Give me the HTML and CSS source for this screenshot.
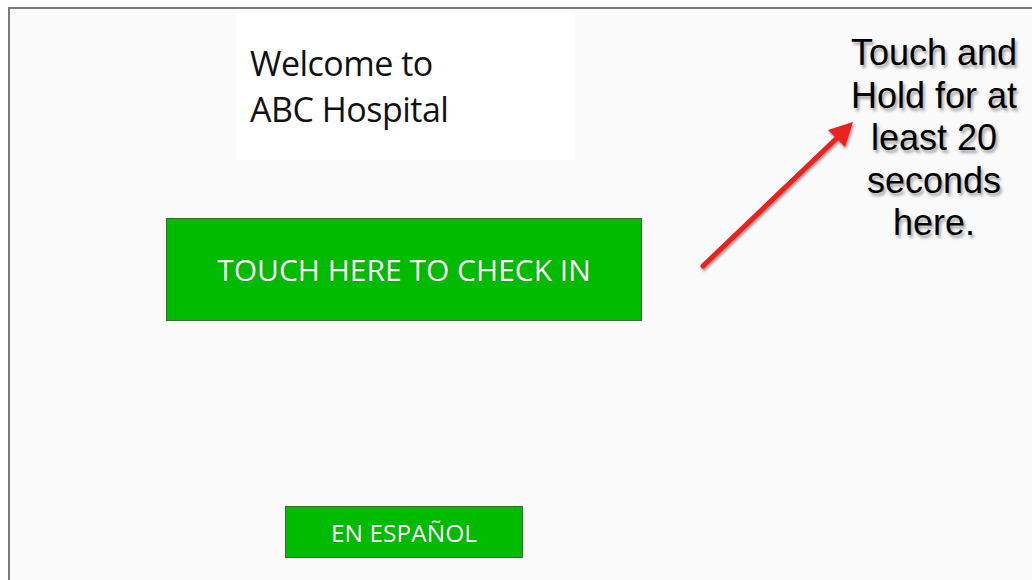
FILE: index.html
```html
<!DOCTYPE html>
<html lang="en">
<head>
<meta charset="utf-8">
<title>ABC Hospital Check-In</title>
<link rel="stylesheet" href="styles.css">
</head>
<body>
  <div class="screen">
    <div class="welcome">
      <p>Welcome to</p>
      <p>ABC Hospital</p>
    </div>
    <button class="btn btn-checkin">TOUCH HERE TO CHECK IN</button>
    <button class="btn btn-spanish">EN ESPAÑOL</button>
  </div>

  <svg class="arrow" width="180" height="170" viewBox="0 0 180 170">
    <defs>
      <filter id="arrow-shadow" x="-20%" y="-20%" width="140%" height="140%">
        <feDropShadow dx="1" dy="2" stdDeviation="1.5" flood-color="#000" flood-opacity="0.45"/>
      </filter>
    </defs>
    <g filter="url(#arrow-shadow)">
      <line x1="8" y1="152" x2="143" y2="23" stroke="#e8201f" stroke-width="5" stroke-linecap="round"/>
      <polygon points="158,8 150,33 133,16" fill="#e8201f"/>
    </g>
  </svg>

  <div class="hint">Touch and<br>Hold for at<br>least 20<br>seconds<br>here.</div>
</body>
</html>
```
FILE: styles.css
```css
html, body {
  margin: 0;
  padding: 0;
  background: #ffffff;
}

body {
  position: relative;
  width: 1032px;
  height: 580px;
  overflow: hidden;
}

.screen {
  margin: 7px 0 0 8px;
  height: 573px;
  border-left: 2px solid #7a7a7a;
  border-top: 2px solid #7a7a7a;
  background: #fafafa;
  display: flex;
  flex-direction: column;
  align-items: flex-start;
  font-family: "Open Sans", "Noto Sans", sans-serif;
}

.welcome {
  margin: 4px 0 0 226px;
  width: 325px;
  height: 120px;
  padding: 27px 0 0 14px;
  background: #ffffff;
  color: #111111;
  font-size: 34px;
  line-height: 46px;
  letter-spacing: -0.5px;
}

.welcome p {
  margin: 0;
  white-space: nowrap;
}

.btn {
  display: flex;
  align-items: center;
  justify-content: center;
  background: #00bb00;
  border: 1px solid #3c6b3c;
  color: #ffffff;
  font-family: "Open Sans", "Noto Sans", sans-serif;
  padding: 0;
  text-shadow: 0 0 1px rgba(0, 60, 0, 0.4);
}

.btn-checkin {
  margin: 58px 0 0 156px;
  width: 476px;
  height: 103px;
  font-size: 30px;
}

.btn-spanish {
  margin: 185px 0 0 275px;
  width: 238px;
  height: 52px;
  font-size: 24.5px;
}

.arrow {
  position: absolute;
  left: 695px;
  top: 114px;
}

.hint {
  position: absolute;
  left: 834px;
  top: 32px;
  width: 200px;
  text-align: center;
  font-family: "Liberation Sans", Arial, sans-serif;
  font-size: 36px;
  line-height: 42.5px;
  color: #000000;
  text-shadow: 2px 3px 3px rgba(0, 0, 0, 0.35);
}
```
